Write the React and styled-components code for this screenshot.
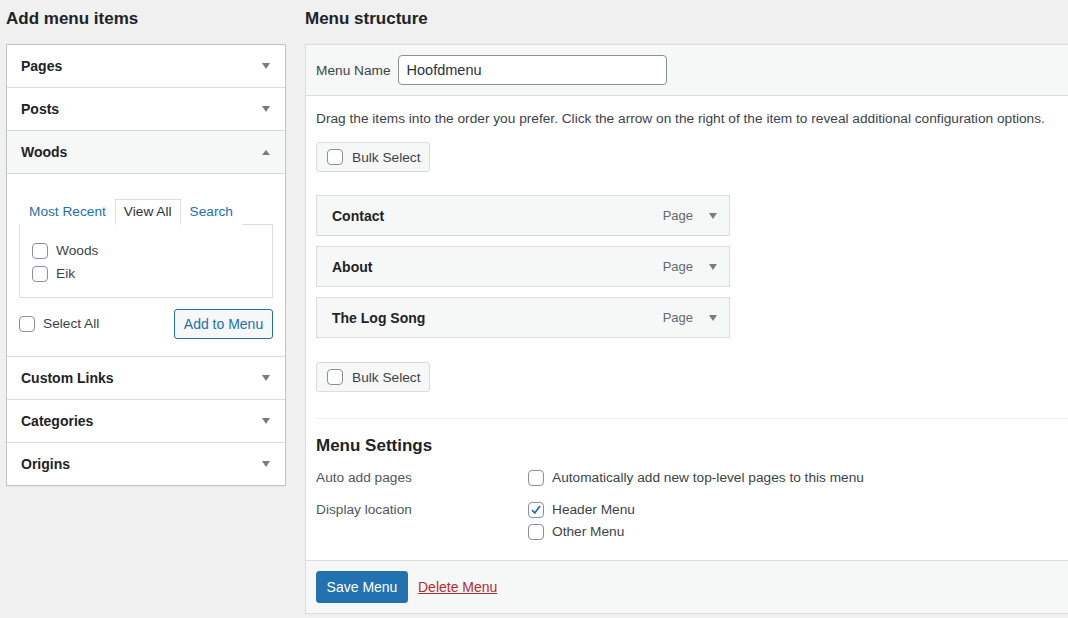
import React from 'react';
import styled, { createGlobalStyle } from 'styled-components';

const GlobalStyle = createGlobalStyle`
  html, body {
    margin: 0;
    padding: 0;
    background: #f0f0f1;
    font-family: "Liberation Sans", Arial, sans-serif;
    font-size: 13.7px;
    color: #3c434a;
  }
  * { box-sizing: border-box; }
`;

const sideItems = ['Pages', 'Posts', 'Woods', 'Custom Links', 'Categories', 'Origins'];
const menuItems = ['Contact', 'About', 'The Log Song'];

const Arrow = ({ up }) => (
  <svg width="10" height="8" viewBox="0 0 10 8">
    {up ? <path d="M1 7 L5 2 L9 7 Z" fill="#787c82" /> : <path d="M1 1 L9 1 L5 7 Z" fill="#787c82" />}
  </svg>
);

const Checkbox = ({ checked }) => (
  <Box>
    {checked && (
      <svg width="14" height="14" viewBox="0 0 14 14">
        <path d="M3 7.2 L5.8 10 L11 3" stroke="#2271b1" strokeWidth="1.8" fill="none" />
      </svg>
    )}
  </Box>
);

const App = () => {
  return (
    <>
      <GlobalStyle />
      <Page>
        <LeftCol>
          <Heading>Add menu items</Heading>
          <SidePanel>
            {sideItems.map((name) => (
              <React.Fragment key={name}>
                <SideRow open={name === 'Woods'}>
                  <span>{name}</span>
                  <Arrow up={name === 'Woods'} />
                </SideRow>
                {name === 'Woods' && (
                  <SideBody>
                    <Tabs>
                      <Tab>Most Recent</Tab>
                      <Tab active>View All</Tab>
                      <Tab>Search</Tab>
                    </Tabs>
                    <TabPanel>
                      <CheckLine><Checkbox />Woods</CheckLine>
                      <CheckLine><Checkbox />Eik</CheckLine>
                    </TabPanel>
                    <SideActions>
                      <CheckLine><Checkbox />Select All</CheckLine>
                      <OutlineButton>Add to Menu</OutlineButton>
                    </SideActions>
                  </SideBody>
                )}
              </React.Fragment>
            ))}
          </SidePanel>
        </LeftCol>

        <RightCol>
          <Heading>Menu structure</Heading>
          <MainPanel>
            <NameBar>
              <label>Menu Name</label>
              <NameInput defaultValue="Hoofdmenu" />
            </NameBar>
            <MainBody>
              <Hint>Drag the items into the order you prefer. Click the arrow on the right of the item to reveal additional configuration options.</Hint>
              <BulkButton><Checkbox />Bulk Select</BulkButton>
              <ItemList>
                {menuItems.map((item) => (
                  <MenuItem key={item}>
                    <strong>{item}</strong>
                    <ItemMeta>
                      <span>Page</span>
                      <Arrow />
                    </ItemMeta>
                  </MenuItem>
                ))}
              </ItemList>
              <BulkButton><Checkbox />Bulk Select</BulkButton>
              <Divider />
              <SubHeading>Menu Settings</SubHeading>
              <SettingsGrid>
                <SettingLabel>Auto add pages</SettingLabel>
                <SettingOptions>
                  <CheckLine><Checkbox />Automatically add new top-level pages to this menu</CheckLine>
                </SettingOptions>
                <SettingLabel>Display location</SettingLabel>
                <SettingOptions>
                  <CheckLine><Checkbox checked />Header Menu</CheckLine>
                  <CheckLine><Checkbox />Other Menu</CheckLine>
                </SettingOptions>
              </SettingsGrid>
            </MainBody>
            <Footer>
              <PrimaryButton>Save Menu</PrimaryButton>
              <DeleteLink>Delete Menu</DeleteLink>
            </Footer>
          </MainPanel>
        </RightCol>
      </Page>
    </>
  );
};

export default App;

const Page = styled.div`
  display: flex;
  gap: 19px;
  padding: 0 0 0 6px;
  width: 1068px;
  height: 618px;
  overflow: hidden;
`;

const LeftCol = styled.div`
  width: 280px;
  flex-shrink: 0;
`;

const RightCol = styled.div`
  flex: 1;
  min-width: 0;
`;

const Heading = styled.h2`
  margin: 0;
  height: 44px;
  line-height: 37px;
  font-size: 17px;
  font-weight: 600;
  color: #1d2327;
`;

const SidePanel = styled.div`
  background: #fff;
  border: 1px solid #c3c4c7;
  box-shadow: 0 1px 1px rgba(0, 0, 0, 0.04);
`;

const SideRow = styled.div`
  display: flex;
  align-items: center;
  justify-content: space-between;
  height: 43px;
  padding: 0 14px 0 14px;
  border-top: 1px solid #dcdcde;
  background: ${(p) => (p.open ? '#f6f7f7' : '#fff')};
  font-size: 14px;
  font-weight: 600;
  color: #1d2327;
  &:first-child { border-top: none; height: 42px; }
`;

const SideBody = styled.div`
  border-top: 1px solid #dcdcde;
  padding: 24px 12px 17px 12px;
`;

const Tabs = styled.div`
  display: flex;
  align-items: flex-end;
  padding-left: 1px;
  height: 26px;
`;

const Tab = styled.div`
  padding: 0 8px;
  height: 26px;
  line-height: 24px;
  color: ${(p) => (p.active ? '#2c3338' : '#2271b1')};
  border: 1px solid ${(p) => (p.active ? '#dcdcde' : 'transparent')};
  border-bottom: 1px solid ${(p) => (p.active ? '#fff' : 'transparent')};
  background: #fff;
  margin-bottom: -1px;
  position: relative;
  z-index: 1;
`;

const TabPanel = styled.div`
  border: 1px solid #dcdcde;
  height: 74px;
  padding: 18px 12px 0 12px;
  display: flex;
  flex-direction: column;
  gap: 7px;
`;

const SideActions = styled.div`
  display: flex;
  justify-content: space-between;
  align-items: center;
  margin-top: 11px;
`;

const CheckLine = styled.label`
  display: flex;
  align-items: center;
  gap: 8px;
  color: #3c434a;
  line-height: 16px;
`;

const Box = styled.span`
  width: 16px;
  height: 16px;
  border: 1px solid #8c8f94;
  border-radius: 4px;
  background: #fff;
  display: inline-flex;
  align-items: center;
  justify-content: center;
  flex-shrink: 0;
`;

const OutlineButton = styled.button`
  height: 30px;
  width: 99px;
  padding: 0;
  border: 1px solid #2271b1;
  border-radius: 3px;
  background: #f6f7f7;
  color: #2271b1;
  font-family: inherit;
  font-size: 14px;
`;

const MainPanel = styled.div`
  background: #fff;
  border: 1px solid #dcdcde;
  border-right: none;
`;

const NameBar = styled.div`
  display: flex;
  align-items: center;
  gap: 7px;
  height: 51px;
  padding: 0 10px;
  background: #f6f7f7;
  border-bottom: 1px solid #dcdcde;
  label { color: #3c434a; }
`;

const NameInput = styled.input`
  width: 269px;
  height: 30px;
  padding: 0 8px;
  border: 1px solid #8c8f94;
  border-radius: 4px;
  font-family: inherit;
  font-size: 14.5px;
  color: #2c3338;
`;

const MainBody = styled.div`
  padding: 14px 0 0 10px;
`;

const Hint = styled.p`
  margin: 0 0 14px;
  line-height: 18px;
  white-space: nowrap;
`;

const BulkButton = styled.div`
  display: inline-flex;
  align-items: center;
  gap: 9px;
  height: 30px;
  padding: 0 9px 0 10px;
  border: 1px solid #dcdcde;
  border-radius: 3px;
  background: #f6f7f7;
  color: #3c434a;
`;

const ItemList = styled.div`
  display: flex;
  flex-direction: column;
  gap: 10px;
  margin: 23px 0 24px;
  width: 414px;
`;

const MenuItem = styled.div`
  display: flex;
  align-items: center;
  justify-content: space-between;
  height: 41px;
  padding: 0 11px 0 15px;
  background: #f6f7f7;
  border: 1px solid #dcdcde;
  strong { font-weight: 600; color: #1d2327; font-size: 14px; }
`;

const ItemMeta = styled.div`
  display: flex;
  align-items: center;
  gap: 15px;
  color: #646970;
  font-size: 13px;
`;

const Divider = styled.hr`
  margin: 26px 0 15px;
  border: none;
  border-top: 1px solid #f0f0f1;
`;

const SubHeading = styled.h3`
  margin: 0 0 12px;
  font-size: 17px;
  font-weight: 600;
  color: #1d2327;
  line-height: 24px;
`;

const SettingsGrid = styled.div`
  display: grid;
  grid-template-columns: 212px 1fr;
  row-gap: 16px;
  padding-bottom: 20px;
`;

const SettingLabel = styled.div`
  color: #50575e;
  line-height: 16px;
`;

const SettingOptions = styled.div`
  display: flex;
  flex-direction: column;
  gap: 6px;
`;

const Footer = styled.div`
  display: flex;
  align-items: center;
  gap: 10px;
  height: 53px;
  padding: 0 10px;
  background: #f6f7f7;
  border-top: 1px solid #dcdcde;
`;

const PrimaryButton = styled.button`
  height: 32px;
  width: 92px;
  padding: 0;
  border: 1px solid #2271b1;
  border-radius: 3px;
  background: #2271b1;
  color: #fff;
  font-family: inherit;
  font-size: 14px;
`;

const DeleteLink = styled.a`
  color: #b32d2e;
  text-decoration: underline;
  font-size: 14px;
`;
